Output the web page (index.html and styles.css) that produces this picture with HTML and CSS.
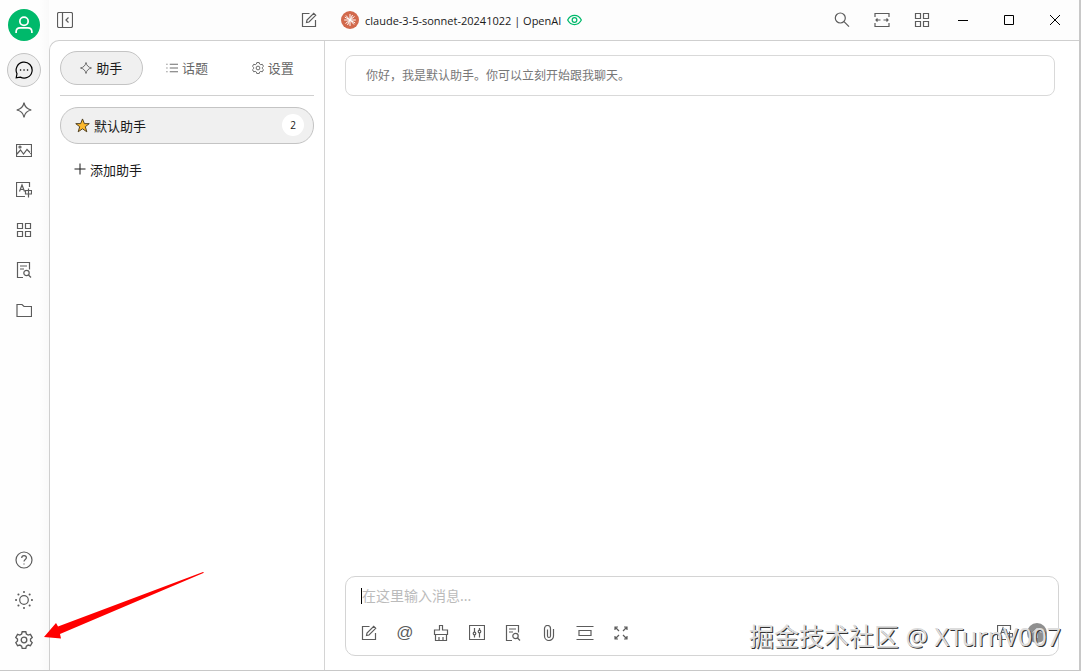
FILE: index.html
```html
<!DOCTYPE html>
<html lang="zh-CN">
<head>
    <meta charset="UTF-8">
    <meta name="viewport" content="width=device-width, initial-scale=1.0">
    <title>默认助手</title>
    <link rel="stylesheet" href="styles.css">
</head>
<body>
    <!-- Shared icons -->
    <svg class="sprite" aria-hidden="true">
        <symbol id="i-spark" viewBox="0 0 16 16"><path d="M8 .7C8.7 4.600 11.400 7.300 15.300 8 11.400 8.700 8.700 11.400 8 15.300 7.300 11.400 4.600 8.700.7 8 4.600 7.300 7.300 4.600 8 .7z"/></symbol>
        <symbol id="i-grid" viewBox="0 0 16 16"><path d="M1.500 1.500h5v5h-5zM9.500 1.500h5v5h-5zM1.500 9.500h5v5h-5zM9.500 9.500h5v5h-5z"/></symbol>
        <symbol id="i-edit" viewBox="0 0 16 16"><path d="M8.500 1.500h-7v13h13V8M5.500 10.500l.5-2.500 6.700-6.700 2 2L8 10z"/></symbol>
        <symbol id="i-doc" viewBox="0 0 16 16"><path d="M7 15.500H1.500V.5h12v7M4 4h7M4 7h4"/><circle cx="10.500" cy="11" r="2.700"/><path d="M12.500 13l2.500 2.500"/></symbol>
        <symbol id="i-translate" viewBox="0 0 16 16"><path d="M13.500 5V.5H.5v14H9M3.500 9.500L6 3l2.500 6.500M4.500 7.500h3M9.500 8.500h6v3.500h-6zM12.500 6.500v9"/></symbol>
        <symbol id="i-gear" viewBox="0 0 16 16"><path d="M6.400.7h3.200l.5 2 1.600.9 2-.6 1.600 2.800-1.500 1.400v1.700l1.500 1.400-1.600 2.800-2-.6-1.600.9-.5 2H6.400l-.5-2-1.600-.9-2 .6-1.600-2.800 1.500-1.400V7.200L.7 5.800 2.300 3l2 .6 1.600-.9z"/><circle cx="8" cy="8" r="2.500"/></symbol>
    </svg>

    <div class="window">
        <!-- Left icon rail -->
        <nav class="rail">
            <button class="avatar" aria-label="用户"><svg viewBox="0 0 16 16"><circle cx="8" cy="4.700" r="3.700"/><path d="M1 15v-1C1 11.500 2.500 10.500 4.500 10.500h7c2 0 3.500 1 3.500 3.500v1"/></svg></button>
            <button class="rail-btn active" aria-label="聊天"><svg class="icon large" viewBox="0 0 18 18"><path d="M1.200 16.800l.8-4.100a8 8 0 1 1 3.300 3.400z"/><path class="dots" d="M5.500 9h.1M9 9h.1M12.500 9h.1"/></svg></button>
            <button class="rail-btn" aria-label="智能体"><svg class="icon"><use href="#i-spark"/></svg></button>
            <button class="rail-btn" aria-label="图片"><svg class="icon" viewBox="0 0 16 16"><path d="M.5 2.500h15v12H.5zM1 12l3.500-4 3 4L11 7.500l4.500 4.500"/><circle cx="4" cy="5" r="1"/></svg></button>
            <button class="rail-btn" aria-label="翻译"><svg class="icon"><use href="#i-translate"/></svg></button>
            <button class="rail-btn" aria-label="小程序"><svg class="icon"><use href="#i-grid"/></svg></button>
            <button class="rail-btn" aria-label="知识库"><svg class="icon"><use href="#i-doc"/></svg></button>
            <button class="rail-btn" aria-label="文件"><svg class="icon" viewBox="0 0 16 16"><path d="M1 2.500h5l2 2h7.500v10H1z"/></svg></button>
            <div class="spacer"></div>
            <button class="rail-btn" aria-label="帮助"><svg class="icon large" viewBox="0 0 18 18"><circle cx="9" cy="9" r="8"/><path d="M6.700 7c0-3.200 4.700-3 4.700-.2 0 1.700-2.400 1.700-2.400 3.700M9 12.500v1"/></svg></button>
            <button class="rail-btn" aria-label="主题"><svg class="icon large" viewBox="0 0 18 18"><circle cx="9" cy="9" r="4.300"/><path class="dots" d="M9 1v.1M9 16.900v.1M1 9h.1M16.900 9h.1M3.400 3.400h.1M14.600 14.600h.1M3.400 14.600h.1M14.600 3.400h.1"/></svg></button>
            <button class="rail-btn" aria-label="设置"><svg class="icon large"><use href="#i-gear"/></svg></button>
        </nav>

        <div class="workspace">
            <!-- Title bar -->
            <header class="topbar">
                <div class="topbar-left">
                    <button aria-label="收起侧栏"><svg class="icon" viewBox="0 0 16 16"><rect x=".5" y=".5" width="15" height="15" rx="1.500"/><path d="M5.500.5v15M11.500 5.500L9 8l2.500 2.500"/></svg></button>
                    <button aria-label="新话题"><svg class="icon"><use href="#i-edit"/></svg></button>
                </div>
                <button class="model">
                    <svg class="model-logo" viewBox="0 0 18 18"><circle cx="9" cy="9" r="9"/><path d="M9 3v12M3.200 9h11.600M5 4.500l8 9M4.500 12.500l9-7M6.500 14l5-10M3.800 6l10.400 6"/></svg>
                    <span>claude-3-5-sonnet-20241022 | OpenAI</span>
                    <svg class="eye" viewBox="0 0 16 12"><path d="M.7 6C4-.5 12-.5 15.300 6 12 12.500 4 12.500.7 6z"/><circle cx="8" cy="6" r="2.500"/></svg>
                </button>
                <div class="tools">
                    <button aria-label="搜索"><svg class="icon" viewBox="0 0 16 16"><circle cx="6.300" cy="6" r="5"/><path d="M10 9.700l5 5"/></svg></button>
                    <button aria-label="宽度"><svg class="icon" viewBox="0 0 16 16"><path d="M1 5V1.500h14V5M1 11v3.500h14V11M2 8h4.500M14 8H9.500M3.500 6.500L2 8l1.500 1.500M12.500 6.500L14 8l-1.500 1.500"/></svg></button>
                    <button aria-label="小程序"><svg class="icon"><use href="#i-grid"/></svg></button>
                </div>
                <div class="window-controls">
                    <button aria-label="最小化"><svg viewBox="0 0 10 10"><path d="M0 5.500h10"/></svg></button>
                    <button aria-label="最大化"><svg viewBox="0 0 10 10"><path d="M.5.5h9v9h-9z"/></svg></button>
                    <button aria-label="关闭"><svg viewBox="0 0 10 10"><path d="M0 0l10 10M10 0L0 10"/></svg></button>
                </div>
            </header>

            <div class="content">
                <!-- Assistant list -->
                <aside class="assistants">
                    <div class="tabs">
                        <button class="tab active"><svg class="icon"><use href="#i-spark"/></svg>助手</button>
                        <button class="tab"><svg class="icon" viewBox="0 0 16 16"><path d="M5 3h11M5 8h11M5 13h11M.5 3H2M.5 8H2M.5 13H2"/></svg>话题</button>
                        <button class="tab"><svg class="icon"><use href="#i-gear"/></svg>设置</button>
                    </div>
                    <button class="assistant">
                        <svg class="star" viewBox="0 0 16 16"><path d="M8 1l2 5h5.200L11 9.300l1.600 5.400L8 11.500l-4.600 3.200L5 9.300.8 6H6z"/></svg>
                        <span>默认助手</span>
                        <span class="count">2</span>
                    </button>
                    <button class="add"><svg viewBox="0 0 12 12"><path d="M6 .5v11M.5 6h11"/></svg>添加助手</button>
                </aside>

                <!-- Chat -->
                <main class="chat">
                    <div class="prompt">你好，我是默认助手。你可以立刻开始跟我聊天。</div>
                    <div class="inputbar">
                        <div class="field">
                            <span class="caret"></span>
                            <textarea rows="1" aria-label="消息" placeholder="在这里输入消息..."></textarea>
                        </div>
                        <div class="toolbar">
                            <button aria-label="新话题"><svg class="icon"><use href="#i-edit"/></svg></button>
                            <button class="at" aria-label="提及模型">@</button>
                            <button aria-label="清空消息"><svg class="icon" viewBox="0 0 16 16"><path d="M6.500 5V.5h3V5h5v4.500h-13V5zM2.500 9.500v6h11v-6M6 15.500V12M10 15.500V12"/></svg></button>
                            <button aria-label="参数"><svg class="icon" viewBox="0 0 16 16"><path d="M.5.5h15v14H.5zM5.500 3v4M5.500 10v2.500M10.500 3v2M10.500 8v4.500"/><circle cx="5.500" cy="8.500" r="1.300"/><circle cx="10.500" cy="6.500" r="1.300"/></svg></button>
                            <button aria-label="知识库"><svg class="icon"><use href="#i-doc"/></svg></button>
                            <button aria-label="附件"><svg class="icon" viewBox="0 0 16 16"><path d="M12.500 4v7a4.500 4.500 0 0 1-9 0V3.500a3 3 0 0 1 6 0V11a1.500 1.500 0 0 1-3 0V4.500"/></svg></button>
                            <button aria-label="清除上下文"><svg class="icon large" viewBox="0 0 18 16"><path d="M.5 1.500h17M.5 14.500h17M3 5.500h12v5H3z"/></svg></button>
                            <button aria-label="展开"><svg class="icon" viewBox="0 0 16 16"><path d="M6 6L2 2M10 6l4-4M6 10l-4 4M10 10l4 4M2 5V2h3M11 2h3v3M2 11v3h3M14 11v3h-3"/></svg></button>
                            <div class="toolbar-right">
                                <button aria-label="翻译"><svg class="icon"><use href="#i-translate"/></svg></button>
                                <button aria-label="发送"><svg class="send" viewBox="0 0 20 20"><circle cx="10" cy="10" r="10"/><path d="M10 15V6M6 9.500L10 5.500l4 4"/></svg></button>
                            </div>
                        </div>
                    </div>
                </main>
            </div>
        </div>
    </div>

    <!-- Pointer to settings -->
    <svg class="arrow" viewBox="0 0 160 67" aria-hidden="true"><path d="M0 65L12 51l2 3.500L159 0l1 .8L16 62l1 4.500z"/></svg>
    <div class="watermark">掘金技术社区 @ XTurnV007</div>
</body>
</html>
```
FILE: styles.css
```css
* {
    box-sizing: border-box;
}

body {
    margin: 0;
    height: 100vh;
    padding: 0 2px 1px 0;
    position: relative;
    overflow: hidden;
    background: #c8c8c8;
    color: #1a1a1a;
    font-family: "Noto Sans", "Noto Sans CJK SC", sans-serif;
    font-size: 13px;
}

button {
    display: flex;
    align-items: center;
    justify-content: center;
    padding: 0;
    border: none;
    background: none;
    color: inherit;
    font: inherit;
    cursor: pointer;
}

svg {
    fill: none;
    stroke: currentColor;
    flex-shrink: 0;
}

.sprite {
    display: none;
}

.icon {
    width: 16px;
    height: 16px;
    color: #5c5c5c;
    stroke-width: 1.2;
}

.icon.large {
    width: 18px;
    height: 18px;
}

.dots {
    stroke-width: 2;
    stroke-linecap: round;
}

.spacer {
    flex: 1;
}

.window {
    display: flex;
    height: 100%;
    background: #fdfdfd;
}

/* Rail */
.rail {
    width: 49px;
    padding: 9px 1px 13px 0;
    display: flex;
    flex-direction: column;
    align-items: center;
    gap: 6px;
    background: linear-gradient(to right, #fefefe 80%, #f9f9f9);
}

.avatar {
    width: 32px;
    height: 32px;
    margin-bottom: 6px;
    border-radius: 50%;
    background: #00b96b;
    color: white;
}

.avatar svg {
    width: 18px;
    height: 18px;
    stroke-width: 1.5;
}

.rail-btn {
    width: 34px;
    height: 34px;
    border: 1px solid transparent;
    border-radius: 50%;
}

.rail-btn.active {
    background: #f0f0f0;
    border-color: #c4c4c4;
}

.rail-btn.active .icon {
    color: #000;
}

.rail-btn.active .dots {
    stroke-width: 1.5;
}

.workspace {
    flex: 1;
    min-width: 0;
    display: flex;
    flex-direction: column;
}

/* Top bar */
.topbar {
    display: flex;
    height: 40px;
    align-items: center;
}

.topbar-left {
    width: 276px;
    padding: 0 8px;
    display: flex;
    justify-content: space-between;
}

.model {
    margin-left: 16px;
    gap: 6px;
    font-family: "Open Sans", sans-serif;
    font-size: 11px;
    white-space: nowrap;
}

.model-logo {
    width: 18px;
    height: 18px;
    color: white;
}

.model-logo circle {
    fill: #d2694c;
    stroke: none;
}

.eye {
    width: 15px;
    height: 12px;
    color: #00b96b;
    stroke-width: 1.3;
}

.tools {
    margin-left: auto;
    display: flex;
    gap: 4px;
}

.tools button {
    width: 36px;
    height: 36px;
}

.window-controls {
    display: flex;
    padding-right: 1px;
    color: #000;
}

.window-controls button {
    width: 46px;
    height: 40px;
}

.window-controls svg {
    width: 10px;
    height: 10px;
}

.content {
    flex: 1;
    min-height: 0;
    display: flex;
    background: white;
    border-top: 1px solid #cfcfcf;
    border-left: 1px solid #cfcfcf;
    border-top-left-radius: 10px;
}

/* Assistants */
.assistants {
    width: 275px;
    padding: 10px;
    border-right: 1px solid #d4d4d4;
}

.tabs {
    display: flex;
    gap: 3px;
    padding-bottom: 10px;
    border-bottom: 1px solid #d0d0d0;
}

.tab {
    flex: 1;
    height: 34px;
    gap: 4px;
    padding-bottom: 1px;
    border: 1px solid transparent;
    border-radius: 17px;
    color: #666;
}

.tab .icon {
    width: 12px;
    height: 12px;
}

.tab.active {
    background: #f0f0f0;
    border-color: #c4c4c4;
    color: #1a1a1a;
}

.assistant {
    width: 100%;
    height: 37px;
    margin-top: 11px;
    padding: 0 9px 1px 14px;
    justify-content: flex-start;
    gap: 4px;
    background: #f0f0f0;
    border: 1px solid #c4c4c4;
    border-radius: 18px;
}

.star {
    width: 15px;
    height: 15px;
    color: #4a3a1a;
}

.star path {
    fill: #fdb92c;
}

.count {
    width: 22px;
    height: 22px;
    margin-left: auto;
    border-radius: 50%;
    background: white;
    font-family: "Open Sans", sans-serif;
    font-size: 10px;
    line-height: 22px;
}

.add {
    height: 32px;
    margin-top: 9px;
    padding-left: 14px;
    gap: 4px;
}

.add svg {
    width: 12px;
    height: 12px;
}

/* Chat */
.chat {
    flex: 1;
    min-width: 0;
    padding: 14px 20px;
    display: flex;
    flex-direction: column;
    justify-content: space-between;
}

.prompt {
    margin-right: 4px;
    padding: 0 20px;
    border: 1px solid #d9d9d9;
    border-radius: 8px;
    color: #777;
    font-size: 12px;
    line-height: 39px;
}

.inputbar {
    height: 80px;
    padding: 8px 6px 7px 8px;
    display: flex;
    flex-direction: column;
    justify-content: space-between;
    border: 1px solid #d4d4d4;
    border-radius: 10px;
}

.field {
    display: flex;
    align-items: center;
    padding: 0 7px;
}

.caret {
    width: 1px;
    height: 16px;
    background: #000;
}

textarea {
    flex: 1;
    height: 22px;
    padding: 0;
    border: none;
    outline: none;
    resize: none;
    background: none;
    font-family: inherit;
    font-size: 14px;
    line-height: 22px;
    overflow: hidden;
}

textarea::placeholder {
    color: #bbb;
}

.toolbar {
    display: flex;
    gap: 6px;
}

.toolbar button {
    width: 30px;
    height: 30px;
}

.toolbar .at {
    color: #5c5c5c;
    font-family: "Liberation Sans", sans-serif;
    font-size: 17px;
}

.toolbar-right {
    display: flex;
    gap: 2px;
    margin-left: auto;
}

.send {
    width: 20px;
    height: 20px;
    color: white;
}

.send circle {
    fill: #8f8f8f;
    stroke: none;
}

/* Overlays */
.arrow {
    position: absolute;
    left: 44px;
    bottom: 32px;
    width: 160px;
    height: 67px;
    stroke: none;
    fill: #f00;
    pointer-events: none;
}

.watermark {
    position: absolute;
    right: 20px;
    bottom: 17px;
    color: #dcdcdc;
    font-size: 25px;
    line-height: 36px;
    white-space: nowrap;
    text-shadow: 1px 1px 0 #333;
    pointer-events: none;
}
```
